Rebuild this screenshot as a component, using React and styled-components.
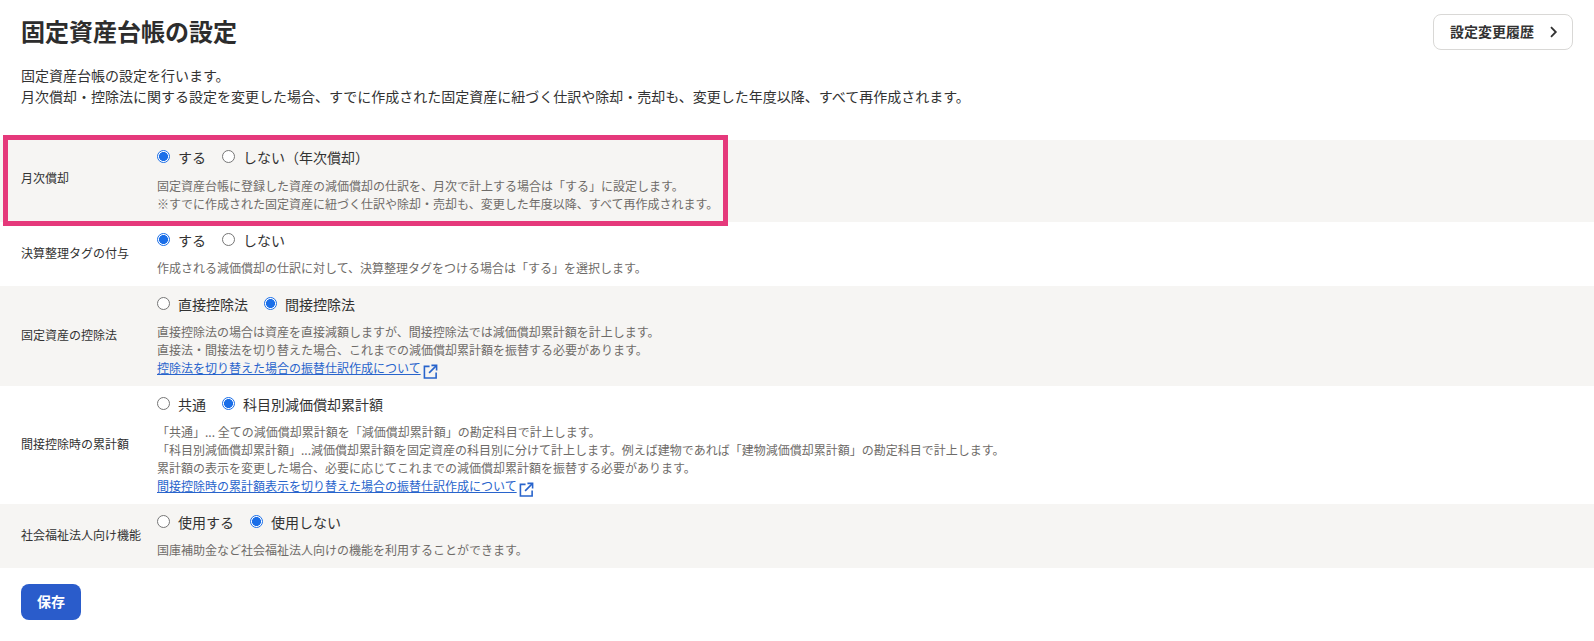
import React from 'react'
import styled, { createGlobalStyle } from 'styled-components'

const GlobalStyle = createGlobalStyle`
  html, body {
    margin: 0;
    padding: 0;
    background: #fff;
    color: #323232;
    font-family: "Noto Sans CJK JP", "Noto Sans", sans-serif;
  }
  * {
    box-sizing: border-box;
  }
`

const settings = [
  {
    label: '月次償却',
    name: 'monthly',
    highlighted: true,
    options: [
      { text: 'する', checked: true },
      { text: 'しない（年次償却）' },
    ],
    help: [
      '固定資産台帳に登録した資産の減価償却の仕訳を、月次で計上する場合は「する」に設定します。',
      '※すでに作成された固定資産に紐づく仕訳や除却・売却も、変更した年度以降、すべて再作成されます。',
    ],
  },
  {
    label: '決算整理タグの付与',
    name: 'tag',
    options: [{ text: 'する', checked: true }, { text: 'しない' }],
    help: ['作成される減価償却の仕訳に対して、決算整理タグをつける場合は「する」を選択します。'],
  },
  {
    label: '固定資産の控除法',
    name: 'method',
    options: [{ text: '直接控除法' }, { text: '間接控除法', checked: true }],
    help: [
      '直接控除法の場合は資産を直接減額しますが、間接控除法では減価償却累計額を計上します。',
      '直接法・間接法を切り替えた場合、これまでの減価償却累計額を振替する必要があります。',
    ],
    link: '控除法を切り替えた場合の振替仕訳作成について',
  },
  {
    label: '間接控除時の累計額',
    name: 'total',
    options: [{ text: '共通' }, { text: '科目別減価償却累計額', checked: true }],
    help: [
      '「共通」... 全ての減価償却累計額を「減価償却累計額」の勘定科目で計上します。',
      '「科目別減価償却累計額」...減価償却累計額を固定資産の科目別に分けて計上します。例えば建物であれば「建物減価償却累計額」の勘定科目で計上します。',
      '累計額の表示を変更した場合、必要に応じてこれまでの減価償却累計額を振替する必要があります。',
    ],
    link: '間接控除時の累計額表示を切り替えた場合の振替仕訳作成について',
  },
  {
    label: '社会福祉法人向け機能',
    name: 'welfare',
    options: [{ text: '使用する' }, { text: '使用しない', checked: true }],
    help: ['国庫補助金など社会福祉法人向けの機能を利用することができます。'],
  },
]

const ExternalIcon = () => (
  <LinkIcon viewBox="0 0 16 16" fill="none" stroke="currentColor" strokeWidth="1.7">
    <path d="M7 2.5H1.5v12.5H14V9" />
    <path d="M6.5 9.5 14 2" />
    <path d="M9 1.5h5.5V7" />
  </LinkIcon>
)

const App = () => {
  return <Page>
    <GlobalStyle />
    <Header>
      <Title>固定資産台帳の設定</Title>
      <HistoryButton type="button">
        <ButtonText>設定変更履歴</ButtonText>
        <svg width="10" height="12" viewBox="0 0 10 12" fill="none" stroke="#323232" strokeWidth="1.8">
          <path d="M2 1.2 6.8 6 2 10.8" />
        </svg>
      </HistoryButton>
    </Header>
    <Description>
      固定資産台帳の設定を行います。<br />
      月次償却・控除法に関する設定を変更した場合、すでに作成された固定資産に紐づく仕訳や除却・売却も、変更した年度以降、すべて再作成されます。
    </Description>
    <Rows>
      {settings.map((row, i) => (
        <Row key={row.name} $striped={i % 2 === 0}>
          {row.highlighted && <Highlight />}
          <RowLabel $lifted={row.highlighted}>{row.label}</RowLabel>
          <RowBody>
            <RadioGroup $lifted={row.highlighted}>
              {row.options.map((option) => (
                <RadioLabel key={option.text}>
                  <Radio type="radio" name={row.name} defaultChecked={option.checked} />
                  {option.text}
                </RadioLabel>
              ))}
            </RadioGroup>
            <Help>
              {row.help.map((line) => <div key={line}>{line}</div>)}
              {row.link && (
                <HelpLink href="#">
                  {row.link}
                  <ExternalIcon />
                </HelpLink>
              )}
            </Help>
          </RowBody>
        </Row>
      ))}
    </Rows>
    <SaveButton type="button"><ButtonText>保存</ButtonText></SaveButton>
  </Page>
}

const Page = styled.main`
  width: 100%;
  min-height: 641px;
`

const Header = styled.header`
  display: flex;
  align-items: center;
  justify-content: space-between;
  padding: 14px 21px 0;
`

const Title = styled.h1`
  margin: 0;
  padding-bottom: 2px;
  font-size: 24px;
  line-height: 34px;
  font-weight: 700;
  color: #2d2d2d;
`

const ButtonText = styled.span`
  display: block;
  padding-bottom: 2px;
`

const HistoryButton = styled.button`
  display: flex;
  align-items: center;
  justify-content: space-between;
  width: 140px;
  height: 36px;
  padding: 0 13px 0 16px;
  border: 1px solid #d9d8d6;
  border-radius: 8px;
  background: #fff;
  color: #323232;
  font-family: inherit;
  font-size: 14px;
  font-weight: 700;
`

const Description = styled.p`
  margin: 15px 0 0;
  padding: 0 21px;
  font-size: 14px;
  line-height: 21px;
  color: #323232;
`

const Rows = styled.section`
  margin-top: 33px;
`

const Row = styled.div`
  position: relative;
  display: flex;
  align-items: center;
  padding: 0 21px;
  background: ${(p) => (p.$striped ? '#f6f5f3' : '#fff')};
`

const Highlight = styled.div`
  position: absolute;
  z-index: 1;
  top: -5px;
  bottom: -4px;
  left: 3px;
  width: 725px;
  border: 5px solid #e5397b;
  pointer-events: none;
`

const RowLabel = styled.div`
  flex: 0 0 136px;
  padding-bottom: ${(p) => (p.$lifted ? '6px' : '2px')};
  font-size: 12px;
  line-height: 18px;
  color: #323232;
`

const RowBody = styled.div`
  flex: 1;
  padding-bottom: 9px;
`

const RadioGroup = styled.div`
  display: flex;
  gap: 16px;
  height: ${(p) => (p.$lifted ? '33px' : '35px')};
  margin-bottom: ${(p) => (p.$lifted ? '4px' : '2px')};
  align-items: center;
`

const RadioLabel = styled.label`
  display: flex;
  align-items: center;
  gap: 8px;
  font-size: 14px;
  color: #323232;
`

const Radio = styled.input`
  appearance: none;
  width: 13px;
  height: 13px;
  margin: 0;
  border: 1px solid #767676;
  border-radius: 50%;
  background: #fff;

  &:checked {
    border-color: #1a6ee8;
    background: radial-gradient(circle, #1a6ee8 0 4.2px, #fff 4.8px);
  }
`

const Help = styled.div`
  font-size: 12px;
  line-height: 18px;
  color: #6e6b68;
`

const HelpLink = styled.a`
  display: inline-flex;
  align-items: flex-end;
  height: 18px;
  color: #2864cc;
  text-decoration: underline;
`

const LinkIcon = styled.svg`
  width: 15px;
  height: 15px;
  margin-left: 2px;
  margin-bottom: -2px;
`

const SaveButton = styled.button`
  display: block;
  width: 60px;
  height: 36px;
  margin: 16px 0 0 21px;
  padding: 0;
  border: none;
  border-radius: 8px;
  background: #2a5ccb;
  color: #fff;
  font-family: inherit;
  font-size: 14px;
  font-weight: 700;
`

export default App
